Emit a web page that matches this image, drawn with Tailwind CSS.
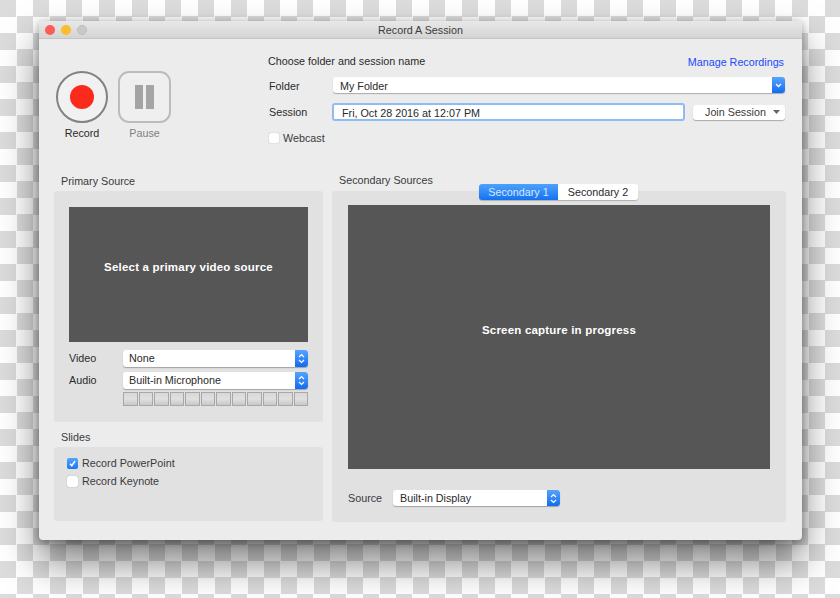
<!DOCTYPE html>
<html lang="en">
<head>
    <meta charset="UTF-8">
    <title>Record A Session</title>
    <script src="https://cdn.jsdelivr.net/npm/@tailwindcss/browser@4"></script>
</head>
<body class="w-[840px] h-[598px] overflow-hidden bg-[repeating-conic-gradient(#ffffff_0_25%,#dcdcdc_0_50%)] bg-[length:33px_33px] font-['Liberation_Sans',Arial,sans-serif] text-[10.75px] text-[#2a2a2a]">
    <div class="pl-[39px] pt-[21px]">
        <!-- Window -->
        <div class="w-[763px] h-[519px] bg-[#ececec] rounded-[4px] shadow-[0_22px_38px_rgba(0,0,0,0.5),0_2px_8px_rgba(0,0,0,0.35)] overflow-hidden flex flex-col">
            <!-- Title bar -->
            <div class="h-[18px] shrink-0 relative flex items-center justify-center pt-[1px] bg-gradient-to-b from-[#e8e8e8] to-[#d4d4d4] border-b border-[#c4c4c4]">
                <div class="absolute left-[6px] top-[4px] flex gap-[6px]">
                    <span class="w-[10px] h-[10px] rounded-full bg-[#fc5b57]"></span>
                    <span class="w-[10px] h-[10px] rounded-full bg-[#fdbb2e]"></span>
                    <span class="w-[10px] h-[10px] rounded-full bg-[#c9c9c9] border border-[#bcbcbc]"></span>
                </div>
                <span class="text-[#3a3a3a]">Record A Session</span>
            </div>

            <!-- Top: record buttons and session form -->
            <div class="h-[133px] shrink-0 flex">
                <div class="w-[229px] shrink-0 pl-[17px] pt-[32px] flex gap-[10px]">
                    <div class="flex flex-col items-center w-[52px]">
                        <div class="w-[52px] h-[52px] rounded-full border-2 border-[#828282] bg-[#f1f1f1] flex items-center justify-center">
                            <span class="w-[24px] h-[24px] rounded-full bg-[#fb2a1c]"></span>
                        </div>
                        <span class="mt-[2px]">Record</span>
                    </div>
                    <div class="flex flex-col items-center w-[53px]">
                        <div class="w-[53px] h-[52px] rounded-[11px] border-2 border-[#bcbcbc] bg-[#efefef] flex items-center justify-center gap-[3px]">
                            <span class="w-[8px] h-[24px] bg-[#a4a4a4]"></span>
                            <span class="w-[8px] h-[24px] bg-[#a4a4a4]"></span>
                        </div>
                        <span class="mt-[2px] text-[#7f7f7f]">Pause</span>
                    </div>
                </div>
                <div class="w-[517px] shrink-0 pt-[15px]">
                    <div class="flex justify-between items-center h-[14px] pr-[1px]">
                        <span>Choose folder and session name</span>
                        <span class="text-[#2049fb] mt-[2px]">Manage Recordings</span>
                    </div>
                    <div class="flex items-center mt-[9px] h-[16px]">
                        <span class="w-[65px] pl-[1px] mt-[2px]">Folder</span>
                        <div class="flex-1 flex h-[16px] rounded-[3px] bg-white shadow-[0_1px_1px_rgba(0,0,0,0.28)]">
                            <span class="flex-1 pl-[7px] leading-[18px]">My Folder</span>
                            <span class="w-[13px] rounded-r-[3px] bg-gradient-to-b from-[#55a3fb] to-[#0f6bf0] flex items-center justify-center">
                                <svg width="7" height="5" viewBox="0 0 7 5" fill="none" stroke="#fff" stroke-width="1.3"><path d="M1 1l2.5 2.5L6 1"/></svg>
                            </span>
                        </div>
                    </div>
                    <div class="flex items-center mt-[10px] h-[18px]">
                        <span class="w-[64px] pl-[1px]">Session</span>
                        <div class="w-[353px] h-[18px] rounded-[3px] bg-white border-2 border-[#8dbcf5] pl-[8px] leading-[16px]">Fri, Oct 28 2016 at 12:07 PM</div>
                        <div class="ml-[8px] w-[92px] h-[15px] rounded-[3px] bg-white shadow-[0_1px_1px_rgba(0,0,0,0.28)] flex items-center pl-[12px] pr-[5px] justify-between">
                            <span class="text-[#3a3a3a]">Join Session</span>
                            <svg width="7" height="4" viewBox="0 0 7 4" fill="#666"><path d="M0 0h7L3.500 4z"/></svg>
                        </div>
                    </div>
                    <div class="flex items-center mt-[11px] pl-[1px] gap-[4px] h-[12px]">
                        <span class="w-[10px] h-[10px] rounded-[1.500px] bg-white shadow-[0_0_1px_rgba(0,0,0,0.45)]"></span>
                        <span class="text-[#3a3a3a]">Webcast</span>
                    </div>
                </div>
            </div>

            <!-- Sources -->
            <div class="flex pl-[15px] gap-[9px]">
                <!-- Left column -->
                <div class="w-[269px] shrink-0">
                    <div class="h-[19px] pl-[7px] pt-[1px] text-[#3a3a3a]">Primary Source</div>
                    <div class="h-[231px] rounded-[3px] bg-[#e1e1e1] px-[15px] pt-[16px]">
                        <div class="h-[135px] pb-[14px] bg-[#565656] flex items-center justify-center text-white font-bold text-[11.5px] tracking-[0.2px]">Select a primary video source</div>
                        <div class="flex items-center h-[17px] mt-[8px]">
                            <span class="w-[54px]">Video</span>
                            <div class="flex-1 flex h-[17px] rounded-[3px] bg-white shadow-[0_1px_1px_rgba(0,0,0,0.28)]">
                                <span class="flex-1 pl-[6px] leading-[16px]">None</span>
                                <span class="w-[13px] rounded-r-[3px] bg-gradient-to-b from-[#55a3fb] to-[#0f6bf0] flex items-center justify-center">
                                    <svg width="7" height="11" viewBox="0 0 7 11" fill="none" stroke="#fff" stroke-width="1.2"><path d="M1 4l2.500-2.500L6 4M1 7l2.500 2.500L6 7"/></svg>
                                </span>
                            </div>
                        </div>
                        <div class="flex items-center h-[17px] mt-[5px]">
                            <span class="w-[54px]">Audio</span>
                            <div class="flex-1 flex h-[17px] rounded-[3px] bg-white shadow-[0_1px_1px_rgba(0,0,0,0.28)]">
                                <span class="flex-1 pl-[6px] leading-[16px]">Built-in Microphone</span>
                                <span class="w-[13px] rounded-r-[3px] bg-gradient-to-b from-[#55a3fb] to-[#0f6bf0] flex items-center justify-center">
                                    <svg width="7" height="11" viewBox="0 0 7 11" fill="none" stroke="#fff" stroke-width="1.2"><path d="M1 4l2.500-2.500L6 4M1 7l2.500 2.500L6 7"/></svg>
                                </span>
                            </div>
                        </div>
                        <div class="ml-[54px] mt-[3px] h-[14px] grid grid-cols-12 gap-px">
                            <span class="bg-gradient-to-b from-[#d8d8d8] via-[#e0e0e0] to-[#c8c8c8] border border-[#a8a8a8]"></span>
                            <span class="bg-gradient-to-b from-[#d8d8d8] via-[#e0e0e0] to-[#c8c8c8] border border-[#a8a8a8]"></span>
                            <span class="bg-gradient-to-b from-[#d8d8d8] via-[#e0e0e0] to-[#c8c8c8] border border-[#a8a8a8]"></span>
                            <span class="bg-gradient-to-b from-[#d8d8d8] via-[#e0e0e0] to-[#c8c8c8] border border-[#a8a8a8]"></span>
                            <span class="bg-gradient-to-b from-[#d8d8d8] via-[#e0e0e0] to-[#c8c8c8] border border-[#a8a8a8]"></span>
                            <span class="bg-gradient-to-b from-[#d8d8d8] via-[#e0e0e0] to-[#c8c8c8] border border-[#a8a8a8]"></span>
                            <span class="bg-gradient-to-b from-[#d8d8d8] via-[#e0e0e0] to-[#c8c8c8] border border-[#a8a8a8]"></span>
                            <span class="bg-gradient-to-b from-[#d8d8d8] via-[#e0e0e0] to-[#c8c8c8] border border-[#a8a8a8]"></span>
                            <span class="bg-gradient-to-b from-[#d8d8d8] via-[#e0e0e0] to-[#c8c8c8] border border-[#a8a8a8]"></span>
                            <span class="bg-gradient-to-b from-[#d8d8d8] via-[#e0e0e0] to-[#c8c8c8] border border-[#a8a8a8]"></span>
                            <span class="bg-gradient-to-b from-[#d8d8d8] via-[#e0e0e0] to-[#c8c8c8] border border-[#a8a8a8]"></span>
                            <span class="bg-gradient-to-b from-[#d8d8d8] via-[#e0e0e0] to-[#c8c8c8] border border-[#a8a8a8]"></span>
                        </div>
                    </div>
                    <div class="h-[25px] pl-[7px] pt-[7px] text-[#3a3a3a]">Slides</div>
                    <div class="h-[74px] rounded-[3px] bg-[#e1e1e1] pl-[13px] pt-[11px] text-[#3a3a3a]">
                        <div class="flex items-center gap-[4px] h-[11px]">
                            <span class="w-[11px] h-[11px] rounded-[2px] bg-gradient-to-b from-[#55a3fb] to-[#1a76f2] flex items-center justify-center">
                                <svg width="9" height="9" viewBox="0 0 9 9" fill="none" stroke="#fff" stroke-width="1.500"><path d="M2 4.700l1.800 2L7 2"/></svg>
                            </span>
                            <span>Record PowerPoint</span>
                        </div>
                        <div class="flex items-center gap-[4px] h-[11px] mt-[7px]">
                            <span class="w-[11px] h-[11px] rounded-[2px] bg-white shadow-[0_0_1px_rgba(0,0,0,0.45)]"></span>
                            <span>Record Keynote</span>
                        </div>
                    </div>
                </div>

                <!-- Right column -->
                <div class="w-[454px] shrink-0">
                    <div class="h-[19px] pl-[7px] text-[#3a3a3a]">Secondary Sources</div>
                    <div class="relative h-[331px] rounded-[3px] bg-[#e1e1e1] px-[16px] pt-[14px]">
                        <div class="absolute left-[147px] top-[-7px] flex h-[16px] rounded-[3px] shadow-[0_1px_1px_rgba(0,0,0,0.22)] overflow-hidden">
                            <span class="w-[79px] bg-gradient-to-b from-[#4ea1fb] to-[#1272f0] text-[#d6e8ff] text-center leading-[16px]">Secondary 1</span>
                            <span class="w-[80px] bg-white text-center leading-[16px]">Secondary 2</span>
                        </div>
                        <div class="h-[264px] pb-[12px] bg-[#565656] flex items-center justify-center text-white font-bold text-[11.5px] tracking-[0.2px]">Screen capture in progress</div>
                        <div class="flex items-center h-[16px] mt-[21px]">
                            <span class="w-[45px] text-[#3a3a3a]">Source</span>
                            <div class="w-[167px] flex h-[16px] rounded-[3px] bg-white shadow-[0_1px_1px_rgba(0,0,0,0.28)]">
                                <span class="flex-1 pl-[7px] leading-[16px]">Built-in Display</span>
                                <span class="w-[13px] rounded-r-[3px] bg-gradient-to-b from-[#55a3fb] to-[#0f6bf0] flex items-center justify-center">
                                    <svg width="7" height="11" viewBox="0 0 7 11" fill="none" stroke="#fff" stroke-width="1.2"><path d="M1 4l2.500-2.500L6 4M1 7l2.500 2.500L6 7"/></svg>
                                </span>
                            </div>
                        </div>
                    </div>
                </div>
            </div>
        </div>
    </div>
</body>
</html>
